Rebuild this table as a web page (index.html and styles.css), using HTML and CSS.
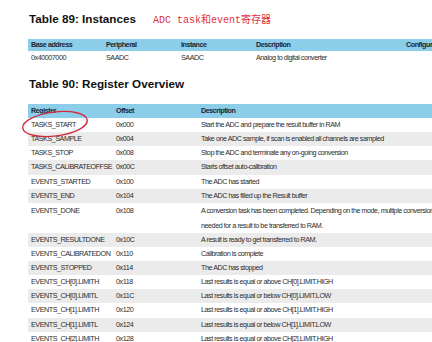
FILE: index.html
```html
<!DOCTYPE html>
<html>
<head>
<meta charset="utf-8">
<link rel="stylesheet" href="styles.css">
</head>
<body>
<div class="page">
  <div class="title-row">
    <h2 class="title">Table 89: Instances</h2>
    <span class="note">ADC task和event寄存器</span>
  </div>
  <table class="tbl t89">
    <colgroup><col class="c75"><col class="c75"><col class="c75"><col class="c150"><col class="c150"></colgroup>
    <thead>
      <tr><th>Base address</th><th>Peripheral</th><th>Instance</th><th>Description</th><th>Configuration</th></tr>
    </thead>
    <tbody>
      <tr><td>0x40007000</td><td>SAADC</td><td>SAADC</td><td>Analog to digital converter</td><td></td></tr>
    </tbody>
  </table>

  <h2 class="title title90">Table 90: Register Overview</h2>
  <div class="t90wrap">
    <table class="tbl t90">
      <colgroup><col class="c85"><col class="c85"><col class="cdesc"></colgroup>
      <thead>
        <tr><th>Register</th><th>Offset</th><th>Description</th></tr>
      </thead>
      <tbody>
        <tr><td>TASKS_START</td><td>0x000</td><td>Start the ADC and prepare the result buffer in RAM</td></tr>
        <tr class="g"><td>TASKS_SAMPLE</td><td>0x004</td><td>Take one ADC sample, if scan is enabled all channels are sampled</td></tr>
        <tr><td>TASKS_STOP</td><td>0x008</td><td>Stop the ADC and terminate any on-going conversion</td></tr>
        <tr class="g"><td>TASKS_CALIBRATEOFFSE</td><td>0x00C</td><td>Starts offset auto-calibration</td></tr>
        <tr><td>EVENTS_STARTED</td><td>0x100</td><td>The ADC has started</td></tr>
        <tr class="g"><td>EVENTS_END</td><td>0x104</td><td>The ADC has filled up the Result buffer</td></tr>
        <tr class="tall"><td>EVENTS_DONE</td><td>0x108</td><td>A conversion task has been completed. Depending on the mode, multiple conversions might be<br>needed for a result to be transferred to RAM.</td></tr>
        <tr class="g"><td>EVENTS_RESULTDONE</td><td>0x10C</td><td>A result is ready to get transferred to RAM.</td></tr>
        <tr><td>EVENTS_CALIBRATEDON</td><td>0x110</td><td>Calibration is complete</td></tr>
        <tr class="g"><td>EVENTS_STOPPED</td><td>0x114</td><td>The ADC has stopped</td></tr>
        <tr><td>EVENTS_CH[0].LIMITH</td><td>0x118</td><td>Last results is equal or above CH[0].LIMIT.HIGH</td></tr>
        <tr class="g"><td>EVENTS_CH[0].LIMITL</td><td>0x11C</td><td>Last results is equal or below CH[0].LIMIT.LOW</td></tr>
        <tr><td>EVENTS_CH[1].LIMITH</td><td>0x120</td><td>Last results is equal or above CH[1].LIMIT.HIGH</td></tr>
        <tr class="g"><td>EVENTS_CH[1].LIMITL</td><td>0x124</td><td>Last results is equal or below CH[1].LIMIT.LOW</td></tr>
        <tr><td>EVENTS_CH[2].LIMITH</td><td>0x128</td><td>Last results is equal or above CH[2].LIMIT.HIGH</td></tr>
      </tbody>
    </table>
    <svg class="circle" width="80" height="38" viewBox="0 0 80 38">
      <ellipse cx="40" cy="19" rx="32.5" ry="12" transform="rotate(-7 40 19)" fill="none" stroke="#d42a3c" stroke-width="1.4"/>
    </svg>
  </div>
</div>
</body>
</html>
```
FILE: styles.css
```css
html, body {
  margin: 0;
  padding: 0;
  background: #ffffff;
  overflow: hidden;
}
body {
  width: 432px;
  height: 342px;
}
.page {
  padding: 11px 0 0 28px;
  width: 700px;
}
.title-row {
  display: flex;
  align-items: baseline;
  gap: 17px;
  height: 14px;
}
.title {
  margin: 0;
  font-family: "Liberation Sans", Arial, sans-serif;
  font-weight: bold;
  font-size: 11.7px;
  line-height: 14px;
  color: #111;
  padding-left: 1px;
}
.note {
  font-family: "Liberation Mono", "Noto Sans CJK SC", monospace;
  font-size: 10px;
  color: #e0323e;
}
.tbl {
  border-collapse: collapse;
  table-layout: fixed;
  font-family: "Liberation Sans", Arial, sans-serif;
  font-size: 7.2px;
  letter-spacing: -0.46px;
  color: #2c2c2c;
}
.tbl th {
  background: #8ccde9;
  text-align: left;
  font-weight: bold;
  color: #1a2733;
  padding: 0 0 0 3px;
  height: 12px;
  line-height: 12px;
  white-space: nowrap;
  overflow: hidden;
}
.tbl td {
  padding: 0 0 0 3px;
  line-height: 14px;
  height: 14px;
  vertical-align: top;
  white-space: nowrap;
  overflow: hidden;
}
.tbl tr.g td {
  background: #ebebeb;
}
.t89 {
  margin-top: 14px;
  width: 525px;
}
.c75 { width: 75px; }
.c150 { width: 150px; }
.c85 { width: 85px; }
.cdesc { width: 430px; }
.title90 {
  margin-top: 12px;
}
.t90wrap {
  position: relative;
  margin-top: 13px;
}
.t90 {
  width: 600px;
}
.t90 th {
  height: 14px;
  line-height: 14px;
}
.t90 td {
  height: 14.13px;
  line-height: 14.13px;
}
.t90 tr.tall td {
  height: 28.3px;
  line-height: 15px;
  padding-top: 0;
}
.circle {
  position: absolute;
  left: -13px;
  top: 1px;
}
```
